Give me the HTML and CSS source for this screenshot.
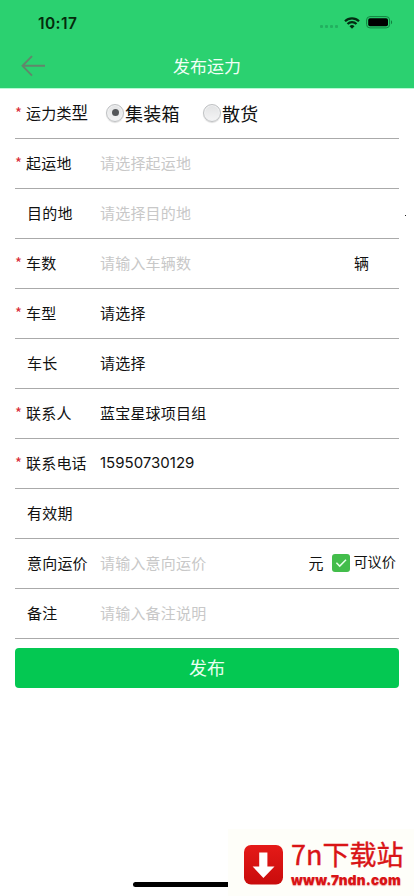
FILE: index.html
```html
<!DOCTYPE html>
<html lang="zh-CN">
<head>
<meta charset="utf-8">
<meta name="viewport" content="width=device-width, initial-scale=1">
<title>发布运力</title>
<link rel="stylesheet" href="styles.css">
</head>
<body>
<header class="header">
  <div class="status">
    <span class="time">10:17</span>
    <span class="signal"><i></i><i></i><i></i><i></i></span>
    <svg class="wifi" width="16" height="12" viewBox="0 0 16 12"><path d="M1 4.3a10 10 0 0 1 14 0M3.5 7a6.4 6.4 0 0 1 9 0" fill="none" stroke="#032b12" stroke-width="2.2"/><path d="M5.5 9.2a3.6 3.6 0 0 1 5 0L8 11.7z" fill="#032b12"/></svg>
    <svg class="battery" width="27" height="13" viewBox="0 0 27 13"><rect x=".6" y=".6" width="23" height="11.3" rx="3.4" fill="none" stroke="#128340"/><rect x="2.2" y="2.2" width="19.8" height="8.1" rx="1.8" fill="#000"/><path d="M25 4.2c1.5.6 1.5 3.5 0 4.1z" fill="#128340"/></svg>
  </div>
  <div class="nav">
    <svg class="back" width="25" height="22" viewBox="0 0 25 22"><path d="M11 1.2L1.5 10.8L11 20.6M1.5 10.8H24" fill="none" stroke="#62866b" stroke-width="1.9"/></svg>
    <h1>发布运力</h1>
  </div>
</header>
<main class="form">
  <div class="row"><span class="star">*</span><span class="label type">运力类<b>型</b></span>
    <span class="option first"><i class="radio on"></i>集装箱</span><span class="option"><i class="radio"></i>散货</span></div>
  <div class="row"><span class="star">*</span><span class="label">起运地</span><span class="value hint">请选择起运地</span></div>
  <div class="row"><span class="star"></span><span class="label plain">目的地</span><span class="value hint">请选择目的地</span><i class="speck"></i></div>
  <div class="row"><span class="star">*</span><span class="label">车数</span><span class="value hint">请输入车辆数</span><span class="unit cars">辆</span></div>
  <div class="row"><span class="star">*</span><span class="label">车型</span><span class="value">请选择</span></div>
  <div class="row"><span class="star"></span><span class="label plain">车长</span><span class="value">请选择</span></div>
  <div class="row"><span class="star">*</span><span class="label">联系人</span><span class="value">蓝宝星球项目组</span></div>
  <div class="row"><span class="star">*</span><span class="label">联系电话</span><span class="value phone">15950730129</span></div>
  <div class="row"><span class="star"></span><span class="label plain">有效期</span></div>
  <div class="row"><span class="star"></span><span class="label plain">意向运价</span><span class="value hint">请输入意向运价</span><span class="unit">元</span>
    <svg class="check" width="18" height="18" viewBox="0 0 18 18"><rect width="18" height="18" rx="3" fill="#43bd4b"/><path d="M4.4 8.8l3.3 3.3 6.3-6.3" fill="none" stroke="#e8ffe9" stroke-width="1.5"/></svg><span class="nego">可议价</span></div>
  <div class="row"><span class="star"></span><span class="label plain">备注</span><span class="value hint">请输入备注说明</span></div>
  <div class="submit">发布</div>
</main>
<div class="home"></div>
<div class="brand">
  <svg width="39" height="40" viewBox="0 0 39 40"><defs><linearGradient id="red" x2="0" y2="1"><stop stop-color="#e51a18"/><stop offset="1" stop-color="#c90c0c"/></linearGradient></defs><rect width="39" height="39.5" rx="7" fill="url(#red)"/><path d="M15.2 7.5h8.2v14h7.1L19.4 33 8.6 21.5h6.6z" fill="#fff"/></svg>
  <div class="brand-text"><span class="brand-name">7n下载站</span><span class="brand-url">www.7ndn.com</span></div>
</div>
</body>
</html>
```
FILE: styles.css
```css
* { box-sizing: border-box; }
body {
  margin: 0;
  width: 414px;
  height: 896px;
  position: relative;
  overflow: hidden;
  background: #fff;
  color: #111;
  font: 15px/20px "Noto Sans CJK SC", sans-serif;
  white-space: nowrap;
}
i, b { font-style: normal; font-weight: inherit; }
svg { display: block; flex: none; }
.header { height: 89px; background: #2bd170; border-bottom: 1px solid #b5fbd3; }
.status { height: 44px; padding: 2px 14px 0 38px; display: flex; align-items: center; }
.time { width: 282px; padding-top: 2px; font: 600 15.5px/20px Inter, sans-serif; color: #042b0c; letter-spacing: .4px; }
.signal { width: 24px; display: flex; gap: 2px; margin-top: 7px; }
.signal i { width: 3px; height: 3px; border-radius: 1px; background: #22b05f; }
.wifi { margin-right: 6px; margin-top: -1px; }
.battery { margin-top: -1px; }
.nav { height: 44px; display: grid; grid-template-columns: 92px 230px 92px; align-items: center; }
.back { margin-left: 21px; }
h1 { margin: 0; text-align: center; color: #f1fff6; font-size: 17px; line-height: 24px; font-weight: 400; }
.form { padding: 0 15px; }
.row { height: 50px; padding-bottom: 2px; display: flex; align-items: center; border-bottom: 1px solid #aaa; position: relative; }
.star { width: 11px; padding-top: 1px; color: #d92c35; font: 15px/20px "Noto Sans CJK SC", sans-serif; }
.label { width: 74px; letter-spacing: .2px; }
.plain { padding-left: 1px; }
.type b { font-size: 16.5px; }
.value { letter-spacing: .2px; }
.hint { color: #c8c8c8; }
.phone { font: 15px/20px Inter, sans-serif; letter-spacing: 0; padding-top: 1px; }
.option { display: flex; align-items: center; gap: 1px; width: 97px; font-size: 18px; line-height: 22px; letter-spacing: .2px; }
.first { margin-left: 6px; }
.radio { width: 18px; height: 18px; border-radius: 50%; border: 1px solid #bfc1c3; background: linear-gradient(#e2e3e4, #f4f4f5); box-shadow: inset 0 0 0 1px #f0f1f2, 0 1px 1px #ddd; display: grid; place-items: center; }
.on::after { content: ""; width: 7px; height: 7px; border-radius: 50%; background: #55575a; }
.unit { margin-left: auto; }
.cars { margin-right: 30px; }
.unit + .check { margin: 0 3px 0 9px; }
.nego { font-size: 14.2px; line-height: 19px; padding-bottom: 2px; margin-right: 3px; }
.speck { position: absolute; left: 390px; top: 26px; width: 1px; height: 1px; background: #222; }
.submit { height: 40px; margin-top: 9px; border-radius: 4px; background: #04c852; color: #e8fff0; text-align: center; font-size: 18px; line-height: 39px; }
.home { position: absolute; left: 133px; top: 882px; width: 100px; height: 5px; border-radius: 3px; background: #000; }
.brand { position: absolute; left: 228px; top: 829px; width: 186px; height: 67px; padding: 16px 0 0 16px; background: #fefef9; display: flex; gap: 8px; }
.brand-text { display: flex; flex-direction: column; color: #d91416; }
.brand-name { font-size: 27px; line-height: 32px; margin-top: -7px; -webkit-text-stroke: .4px #d91416; }
.brand-url { font: 900 13.5px/16px Inter, sans-serif; letter-spacing: .25px; margin-top: 2px; text-shadow: 0 1px 1px #e99; }
```
